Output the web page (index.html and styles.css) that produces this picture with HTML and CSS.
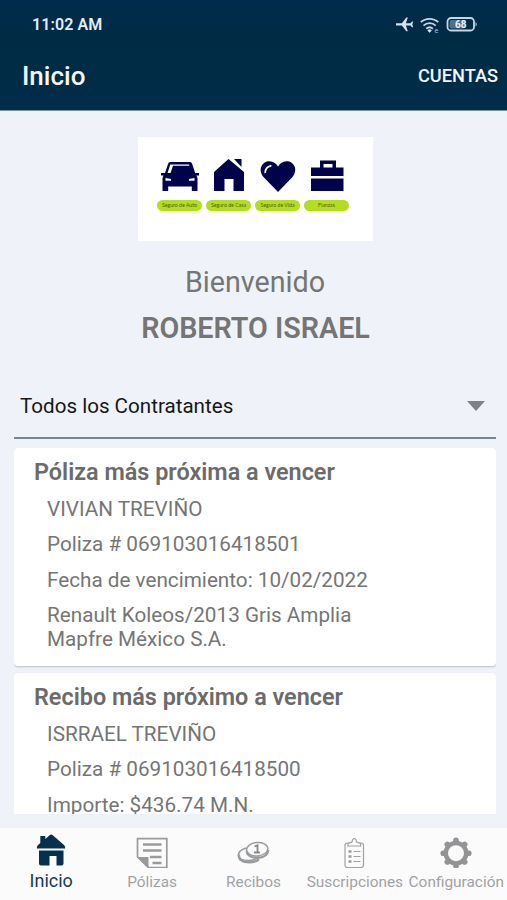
FILE: index.html
```html
<!DOCTYPE html>
<html lang="es">
<head>
<meta charset="utf-8">
<title>Inicio</title>
<link rel="stylesheet" href="styles.css">
</head>
<body>
<div class="app">
  <header class="header">
    <div class="status">
      <span class="clock">11:02 AM</span>
      <svg class="status-icons" width="84" height="20" viewBox="0 0 84 20">
        <path class="ice" d="M17 8.300h-5.400L7.200 2.600H5.700l1.900 5.700H3L1.500 6.500H.3l.9 2.900-.9 2.900h1.200L3 10.500h4.600l-1.900 5.800h1.500l4.400-5.800H17a1.100 1.100 0 0 0 0-2.200z" transform="translate(17.500 0) scale(-1 1)"/>
        <g class="ice-line">
          <path d="M24.800 7.200a13 13 0 0 1 17.500 0M27.500 10.600a9 9 0 0 1 12.200 0M30.300 13.700a5 5 0 0 1 6.600 0"/>
          <rect x="51.500" y="3" width="26.500" height="12.500" rx="3.500"/>
        </g>
        <path class="ice" d="M33.600 17.800l-2.200-2.400a3.200 3.200 0 0 1 4.400 0zM79.600 7q2.200 2.200 0 4.600z"/>
        <rect class="charge" x="53.500" y="5" width="15.500" height="8.500" rx="2"/>
        <text class="tiny-ice" x="38.500" y="17.500">e</text>
        <text class="percent" x="64.700" y="13" text-anchor="middle">68</text>
      </svg>
    </div>
    <div class="titlebar">
      <h1 class="screen-title">Inicio</h1>
      <span class="action">CUENTAS</span>
    </div>
  </header>

  <main class="content">
    <section class="banner">
      <div class="product">
        <svg width="44" height="36" viewBox="0 0 44 36">
          <path class="navy" fill-rule="evenodd" d="M12 3h20q1.500 0 2 1.500l3.200 9.500H41v2.500h-2.500l1 2.500v13h-5.700v-4.500H10.200V32H4.500V19l1-2.500H3V14h4L10.200 4.500Q10.700 3 12 3zM12.300 5.500L9.500 14h3L15 6.800h16.500L31 5.500zM7.500 19v2.800H13V20zM36.500 19v2.800H31V20z"/>
        </svg>
        <span class="pill">Seguro de Auto</span>
      </div>
      <div class="product">
        <svg width="44" height="36" viewBox="0 0 44 36">
          <path class="navy" d="M7 32V13L21.500 0 37 13v19H26.500V20h-9v12zM27 0h7.500v8z"/>
        </svg>
        <span class="pill">Seguro de Casa</span>
      </div>
      <div class="product">
        <svg width="44" height="36" viewBox="0 0 44 36">
          <path class="navy" d="M22 33L7.500 18C1 10 7 2 13.500 2.300q5.500.2 8.500 5.200 3-5 8.500-5.200C37 2 43 10 36.500 18z"/>
          <path class="shine" d="M9.200 13.500q.2-5.500 5.600-6.700"/>
        </svg>
        <span class="pill">Seguro de Vida</span>
      </div>
      <div class="product">
        <svg width="44" height="36" viewBox="0 0 44 36">
          <path class="navy" fill-rule="evenodd" d="M6 8.500h9V1.500h16v7h7.500V17H6zM18.500 5v3.500h9V5zM6 19.500h32.500V32H6z"/>
        </svg>
        <span class="pill">Fianzas</span>
      </div>
    </section>

    <p class="welcome">Bienvenido</p>
    <p class="name">ROBERTO ISRAEL</p>

    <div class="select">
      <span>Todos los Contratantes</span>
      <svg width="18" height="10" viewBox="0 0 18 10"><path class="caret" d="M0 0h18l-9 10z"/></svg>
    </div>

    <div class="cards">
      <article class="card">
        <h2>Póliza más próxima a vencer</h2>
        <p>VIVIAN TREVIÑO</p>
        <p>Poliza # 069103016418501</p>
        <p>Fecha de vencimiento: 10/02/2022</p>
        <p>Renault Koleos/2013 Gris Amplia<br>Mapfre México S.A.</p>
      </article>
      <article class="card">
        <h2>Recibo más próximo a vencer</h2>
        <p>ISRRAEL TREVIÑO</p>
        <p>Poliza # 069103016418500</p>
        <p>Importe: $436.74 M.N.</p>
      </article>
    </div>
  </main>

  <nav class="tabs">
    <a class="tab active">
      <svg width="36" height="36" viewBox="0 0 36 36">
        <path class="teal" d="M4 16.500q-.8-2 1-3.500l2.300-2V4h5v3l4.600-4q1.300-1 2.600 0L31 13q1.800 1.500 1 3.500zM6 18.500h24.500v13q0 2-2 2h-5V24h-7v9.500H8q-2 0-2-2z"/>
      </svg>
      <span>Inicio</span>
    </a>
    <a class="tab">
      <svg width="36" height="36" viewBox="0 0 36 36">
        <path class="line" d="M3.500 6.700h29.300v29H14.500L3.500 25z"/>
        <path class="bars" d="M9 12.500h18.500M9 18.500h18.500M16 25h11.500M18.500 31h9"/>
        <path class="grey" d="M3.500 25h11v10.700z"/>
      </svg>
      <span>Pólizas</span>
    </a>
    <a class="tab">
      <svg width="36" height="36" viewBox="0 0 36 36">
        <path class="line coin" d="M11 16Q3.500 18.500 3.500 22.500C3.500 27 9 28.500 13.500 28.500q7 0 10.500-4"/>
        <path class="line thick" d="M3.800 22.500q-.3 7.800 10.700 7.800 6 0 9.500-3"/>
        <ellipse class="line coin" cx="22.200" cy="17.200" rx="10.700" ry="6.700" transform="rotate(-5 22.200 17.200)"/>
        <path class="line thick" d="M11.500 19.500q2 6.500 11 6.300 10-.3 10.700-7.800"/>
        <path class="one" d="M19.500 14.500l3-1.200v7M19 20.500h6"/>
      </svg>
      <span>Recibos</span>
    </a>
    <a class="tab">
      <svg width="36" height="36" viewBox="0 0 36 36">
        <rect class="thin" x="8" y="11" width="18.500" height="24.500" rx="2.500"/>
        <path class="thin clip" d="M11 14v-2.500l4-1.500q.5-3.500 2.300-3.500T19.600 10l4 1.500V14z"/>
        <path class="thin" d="M16.500 19.500h7M16.500 24.500h7M16.500 29.500h7"/>
        <path class="bars" d="M11.500 19.500h3M11.500 24.500h3M11.500 29.500h3"/>
      </svg>
      <span>Suscripciones</span>
    </a>
    <a class="tab">
      <svg width="36" height="36" viewBox="0 0 36 36">
        <g transform="translate(18 21.200)">
          <circle class="gear-ring" r="10.200"/>
          <g class="gear-teeth">
            <path d="M0-11.500V-12.800M0 11.500V12.800M-11.500 0H-12.800M11.500 0H12.800"/>
            <path d="M0-11.500V-12.300M0 11.500V12.300M-11.500 0H-12.300M11.500 0H12.300" transform="rotate(45)"/>
          </g>
        </g>
      </svg>
      <span>Configuración</span>
    </a>
  </nav>
</div>
</body>
</html>
```
FILE: styles.css
```css
* { box-sizing: border-box; }
body { margin: 0; font-family: Roboto, "Liberation Sans", sans-serif; }
h1, h2, p { margin: 0; }
svg { display: block; flex: none; }

.app { width: 507px; height: 900px; display: flex; flex-direction: column; overflow: hidden; background: #eff2f8; color: #757575; }

.header { height: 111px; flex: none; background: linear-gradient(#002b4b, #002b45 40%, #002d48); border-bottom: 1px solid #7c8b9c; color: #f3f6fa; }
.status { display: flex; justify-content: space-between; align-items: center; height: 48px; padding: 1px 27px 0 32px; }
.clock { font-size: 16px; font-weight: 600; letter-spacing: .1px; color: #e3edf8; }
.ice { fill: #d5e2ee; }
.ice-line { fill: none; stroke: #c5d6e4; stroke-width: 1.800; }
.charge { fill: #507089; }
.tiny-ice { fill: #b5c6d6; font-size: 7px; }
.percent { fill: #e8f1f8; font-size: 10px; font-weight: 700; }
.titlebar { display: flex; justify-content: space-between; align-items: center; height: 56px; padding: 0 9px 0 22px; }
.screen-title { font-size: 26px; font-weight: 500; line-height: 32px; }
.action { font-size: 18.200px; font-weight: 500; margin-top: -2px; }

.content { flex: 1; min-height: 0; padding: 26px 11px 0 14px; display: flex; flex-direction: column; }
.banner { width: 235px; height: 104px; margin-left: 124px; flex: none; background: #fff; display: flex; gap: 4px; padding: 22px 0 0 19px; }
.product { width: 45px; display: flex; flex-direction: column; align-items: center; gap: 5px; }
.pill { width: 45px; height: 11px; border-radius: 6px; background: #b4dd20; color: #4a6024; font: 5.200px/11px Lato, sans-serif; text-align: center; white-space: nowrap; }
.navy { fill: #02024a; }
.shine { fill: none; stroke: #fff; stroke-width: 1.700; stroke-linecap: round; }

.welcome { margin-top: 24px; text-align: center; font-size: 28.700px; line-height: 34px; }
.name { margin-top: 12px; padding-left: 1px; text-align: center; font-size: 28.700px; line-height: 34px; font-weight: 600; }

.select { height: 69px; width: 482px; margin-top: 25px; padding: 5px 11px 0 6px; display: flex; flex: none; align-items: center; justify-content: space-between; border-bottom: 2px solid #6f8894; color: #15171a; font-size: 20.600px; }
.caret { fill: #808184; }

.cards { flex: 1; min-height: 0; margin: 9px 0 14px; width: 482px; overflow: hidden; }
.card { background: #fff; border-radius: 4px; box-shadow: 0 1px 2px #b9bfc9; padding: 10px 20px 13px; height: 217.500px; margin-bottom: 7.500px; }
.card h2 { margin-bottom: -1px; font-size: 23.400px; line-height: 28px; font-weight: 600; color: #6b6b6b; white-space: nowrap; }
.card p { margin-top: 11.500px; padding-left: 13px; font-size: 20.700px; line-height: 24px; white-space: nowrap; }
.card h2 + p { margin-top: 11.700px; }

.tabs { height: 72px; flex: none; display: grid; grid-template-columns: repeat(5, 101.400px); background: #fbfbfc; color: #a1a2a4; }
.tab { display: flex; flex-direction: column; align-items: center; padding-top: 4px; font-size: 15.400px; }
.tab span { line-height: 22px; margin-top: 3px; white-space: nowrap; }
.active { color: #173a54; font-size: 18px; padding-left: 1px; }
.active span { margin-top: 2px; }
.teal { fill: #06304c; }
.grey { fill: #999; }
.line { fill: #fbfbfc; stroke: #999b9d; stroke-width: 1.700; }
.coin { stroke-width: 1.500; }
.thick { fill: none; stroke-width: 2.400; }
.one { fill: none; stroke: #888; stroke-width: 1.800; }
.thin { fill: none; stroke: #a0a1a3; stroke-width: 1.200; }
.clip { fill: #fbfbfc; }
.bars { fill: none; stroke: #999b9d; stroke-width: 2.600; }
.gear-ring { fill: none; stroke: #929496; stroke-width: 4.400; }
.gear-teeth { fill: none; stroke: #929496; stroke-width: 5.600; stroke-linecap: round; }
```
